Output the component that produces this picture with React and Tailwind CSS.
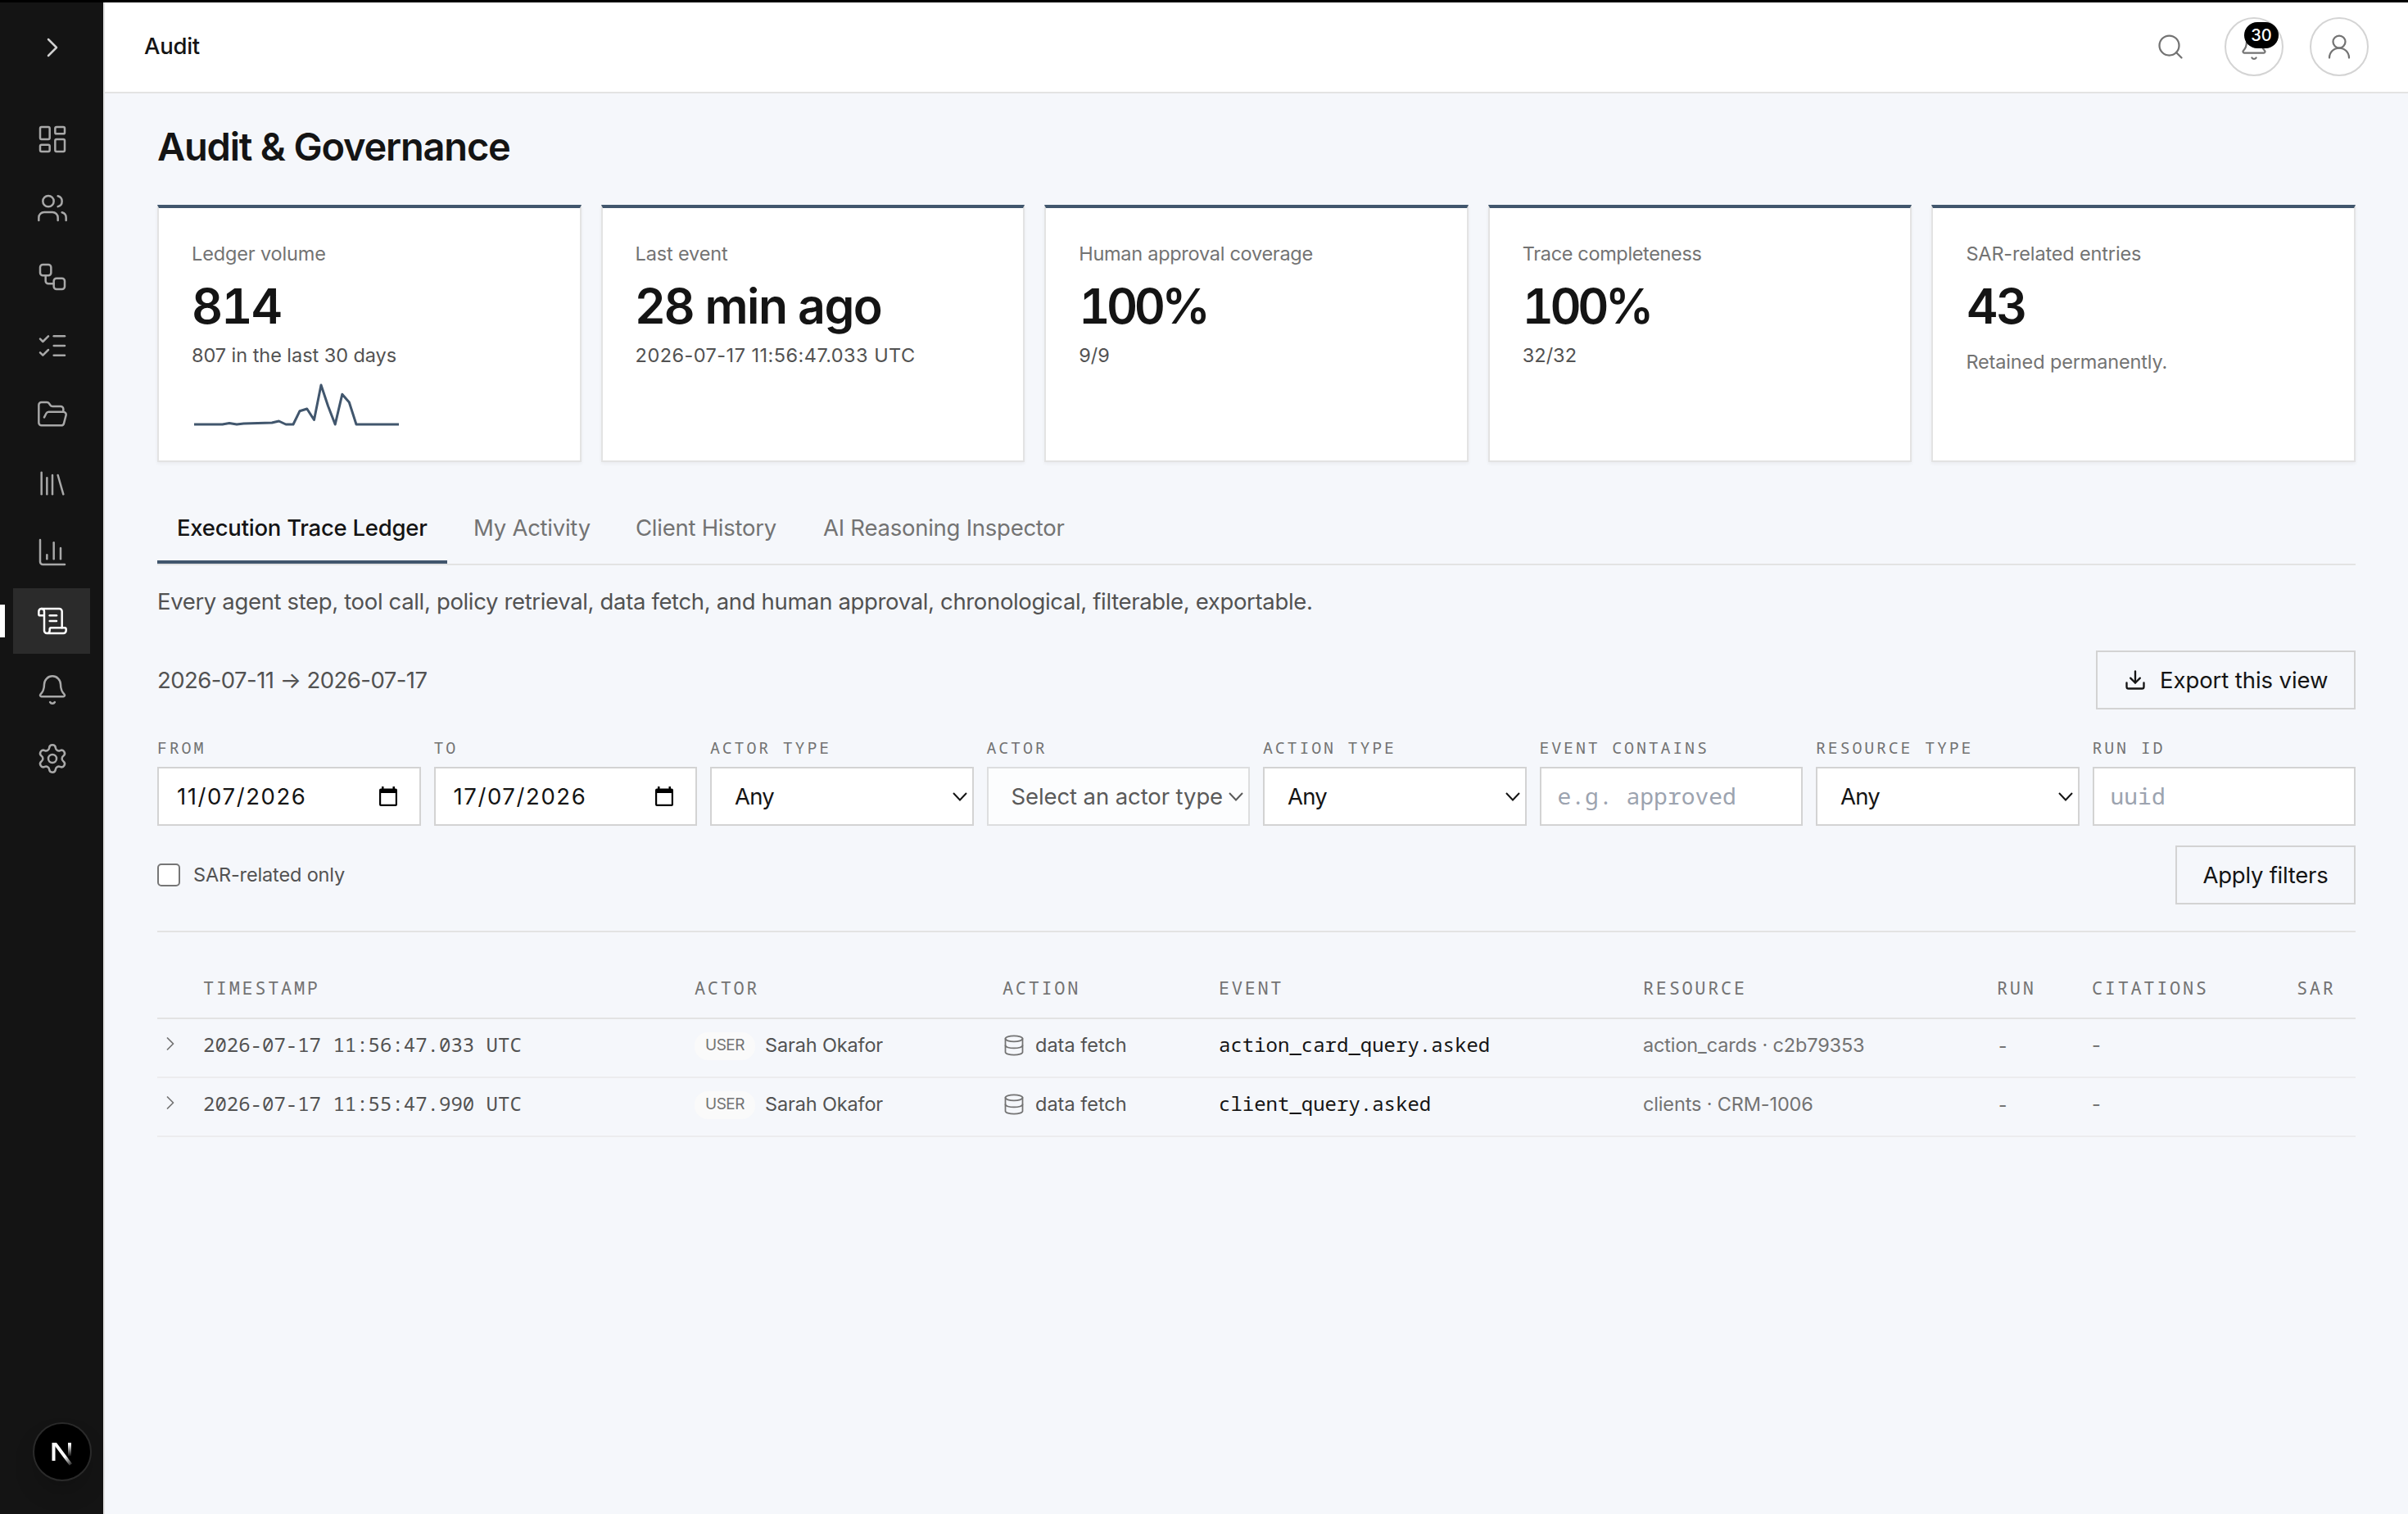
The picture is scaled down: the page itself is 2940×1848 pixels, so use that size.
import React from 'react';
import {
    Bell,
    ChartColumn,
    ChevronRight,
    Database,
    Download,
    FolderOpen,
    LayoutDashboard,
    Library,
    ListChecks,
    ScrollText,
    Search,
    Settings,
    UserRound,
    Users,
    Workflow,
} from 'lucide-react';

const navItems = [
    { name: 'Dashboard', icon: LayoutDashboard },
    { name: 'Clients', icon: Users },
    { name: 'Workflows', icon: Workflow },
    { name: 'Tasks', icon: ListChecks },
    { name: 'Documents', icon: FolderOpen },
    { name: 'Library', icon: Library },
    { name: 'Reports', icon: ChartColumn },
    { name: 'Audit', icon: ScrollText, active: true },
    { name: 'Notifications', icon: Bell },
    { name: 'Settings', icon: Settings },
];

const tabs = [
    { label: 'Execution Trace Ledger', width: 'w-[354px]', active: true },
    { label: 'My Activity', width: 'w-[190px]' },
    { label: 'Client History', width: 'w-[221px]' },
    { label: 'AI Reasoning Inspector', width: 'w-[344px]' },
];

const rows = [
    { time: '2026-07-17 11:56:47.033 UTC', actor: 'Sarah Okafor', event: 'action_card_query.asked', resource: 'action_cards · c2b79353' },
    { time: '2026-07-17 11:55:47.990 UTC', actor: 'Sarah Okafor', event: 'client_query.asked', resource: 'clients · CRM-1006' },
];

const columns = ['', 'Timestamp', 'Actor', 'Action', 'Event', 'Resource', 'Run', 'Citations', 'SAR'];
const columnGrid = 'grid grid-cols-[56px_600px_376px_264px_518px_432px_116px_250px_1fr] items-center';
const mono = "font-['Noto_Sans_Mono','DejaVu_Sans_Mono',monospace]";

const Sidebar = () => (
    <aside className="relative w-32 shrink-0 bg-[#141414] border-r-2 border-[#e3e3e3]">
        <button className="flex items-center h-[110px] pl-11 text-[#d0d0d0]">
            <ChevronRight size={40} strokeWidth={1.5} />
        </button>
        <nav className="flex flex-col gap-1 px-4 pt-[17px]">
            {navItems.map(({ name, icon: Icon, active }) => (
                <a
                    key={name}
                    aria-label={name}
                    className={`relative flex items-center h-20 w-[94px] pl-7 ${active ? 'bg-[#2b2b2b] text-white' : 'text-[#a8a8a8]'}`}
                >
                    {active && <span className="absolute -left-4 top-5 w-1.5 h-10 bg-white" />}
                    <Icon size={40} strokeWidth={1.5} />
                </a>
            ))}
        </nav>

        {/* Dev tools badge */}
        <div className="absolute left-10 bottom-10 w-[72px] h-[72px] rounded-full bg-black border-2 border-[#2a2a2a] shadow-[0_16px_32px_-8px_rgba(0,0,0,0.24)] z-10">
            <svg viewBox="0 0 68 68" className="w-full h-full" fill="none">
                <defs>
                    <linearGradient id="diag" x1="22" y1="24" x2="46" y2="52" gradientUnits="userSpaceOnUse">
                        <stop offset="0.6" stopColor="#fff" />
                        <stop offset="1" stopColor="#fff" stopOpacity="0" />
                    </linearGradient>
                    <linearGradient id="stem" x1="0" y1="23" x2="0" y2="40" gradientUnits="userSpaceOnUse">
                        <stop offset="0.1" stopColor="#fff" />
                        <stop offset="1" stopColor="#fff" stopOpacity="0" />
                    </linearGradient>
                </defs>
                <rect x="21.5" y="23" width="4" height="22" fill="#fff" />
                <rect x="41" y="23" width="4" height="16" fill="url(#stem)" />
                <path d="M22 23h5L46 48.5l-3.2 2.2L22 23Z" fill="url(#diag)" />
            </svg>
        </div>
    </aside>
);

const Header = () => (
    <header className="flex items-center justify-between h-[111px] shrink-0 bg-white border-b-2 border-[#e3e3e3] pl-12 pr-12 pb-px">
        <span className="text-[27.5px] font-medium tracking-[-0.3px] text-[#141414]">Audit</span>
        <div className="flex items-center text-[#737373]">
            <Search size={36} strokeWidth={1.5} />
            <button className="relative ml-12 flex items-center justify-center w-[72px] h-[72px] rounded-full border-2 border-[#d4d4d4]">
                <Bell size={36} strokeWidth={1.5} />
                <span className="absolute left-[22px] top-1 flex items-center justify-center w-[42px] h-8 rounded-full bg-black text-white text-[20px] font-medium">
                    30
                </span>
            </button>
            <button className="ml-8 flex items-center justify-center w-[72px] h-[72px] rounded-full border-2 border-[#d4d4d4]">
                <UserRound size={36} strokeWidth={1.5} />
            </button>
        </div>
    </header>
);

const StatCard = ({ label, labelClass = 'tracking-[-0.15px]', value, valueClass, children }) => (
    <div className="bg-white border-2 border-t-4 border-[#e3e3e3] border-t-[#41566d] p-10 shadow-[0_2px_4px_rgba(0,0,0,0.05)] text-[23.5px]">
        <div className={`leading-8 text-[#737373] ${labelClass}`}>{label}</div>
        <div className={`mt-4 text-[59px] leading-[63px] font-semibold text-[#141414] ${valueClass}`}>{value}</div>
        {children}
    </div>
);

const Sparkline = () => (
    <svg viewBox="0 0 256 56" className="mt-4 w-64 h-14" fill="none" stroke="#41566d" strokeWidth="3" strokeLinejoin="round">
        <path d="M3 52H37.5L46 50.5L55 52L63.5 51L98 50L106.5 48L115 52H124L132 35.7L140.8 33L149.5 46.5L158 4L166.5 29.5L175.2 52L183.8 15.3L192.3 25L201 52H253" />
    </svg>
);

const Field = ({ label, children }) => (
    <label className="flex-1 min-w-0">
        <span className={`${mono} block h-[38px] pt-px leading-7 text-[20px] tracking-[2.8px] uppercase text-[#737373]`}>{label}</span>
        {children}
    </label>
);

const DateField = ({ label, value }) => (
    <Field label={label}>
        <div className="flex items-center justify-between h-[72px] bg-white border-2 border-[#d3d3d3] pt-px pl-[22px] pr-[27px] text-[27.5px] tracking-[1.6px] text-[#141414]">
            {value}
            <svg viewBox="0 0 22 24" className="w-[22px] h-6 mb-0.5" fill="#000">
                <path fillRule="evenodd" d="M3 0h2.5v2.5h11V0H19v2.5h1a2 2 0 0 1 2 2V22a2 2 0 0 1-2 2H2a2 2 0 0 1-2-2V4.5a2 2 0 0 1 2-2h1V0ZM2.2 8v13.800h17.600V8H2.200Z" />
            </svg>
        </div>
    </Field>
);

const SelectField = ({ label, value, disabled }) => (
    <Field label={label}>
        <div
            className={`flex items-center h-[72px] border-2 pt-px pl-7 pr-[6px] text-[27.5px] ${
                disabled ? 'bg-[#fcfdfe] border-[#dddedf] text-[#5a5a5a] tracking-[-0.1px]' : 'bg-white border-[#d3d3d3] text-[#141414] tracking-[-0.8px]'
            }`}
        >
            <span className="flex-1 whitespace-nowrap">{value}</span>
            <svg viewBox="0 0 18 11" className="w-[18px] h-[11px] shrink-0" fill="none" stroke="currentColor" strokeWidth="2">
                <path d="M1 1l8 8.5L17 1" />
            </svg>
        </div>
    </Field>
);

const TextField = ({ label, placeholder }) => (
    <Field label={label}>
        <input
            className={`${mono} block w-full h-[72px] bg-white border-2 border-[#d3d3d3] pl-5 pb-[2px] text-[28px] placeholder:text-[#9ca3af]`}
            placeholder={placeholder}
        />
    </Field>
);

export default function App() {
    return (
        <div className="flex flex-col h-[1848px] overflow-hidden bg-[#f5f7fb] font-['Inter',sans-serif]">
            <div className="h-[3px] shrink-0 bg-black" />
            <div className="flex flex-1 min-h-0">
                <Sidebar />
                <div className="flex-1 min-w-0 flex flex-col">
                    <Header />
                    <main className="px-16 pt-[33px]">
                        <h1 className="text-[47px] leading-[64px] font-semibold tracking-[-1.2px] text-[#141414]">Audit &amp; Governance</h1>

                        <section className="mt-[39px] grid grid-cols-5 gap-6">
                            <StatCard label="Ledger volume" value="814" valueClass="tabular-nums tracking-[-1.8px]">
                                <div className="mt-3 leading-[33px] tracking-[-0.05px] text-[#525252]">807 in the last 30 days</div>
                                <Sparkline />
                            </StatCard>
                            <StatCard label="Last event" value="28 min ago" valueClass="tracking-[-1.5px]">
                                <div className="mt-3 leading-[33px] tracking-[0.46px] text-[#525252]">2026-07-17 11:56:47.033 UTC</div>
                            </StatCard>
                            <StatCard label="Human approval coverage" labelClass="tracking-[-0.27px]" value="100%" valueClass="tabular-nums tracking-[-4.4px]">
                                <div className="mt-3 leading-[33px] text-[#525252]">9/9</div>
                            </StatCard>
                            <StatCard label="Trace completeness" labelClass="tracking-[-0.35px]" value="100%" valueClass="tabular-nums tracking-[-4.4px]">
                                <div className="mt-3 leading-[33px] text-[#525252]">32/32</div>
                            </StatCard>
                            <StatCard label="SAR-related entries" value="43" valueClass="tracking-[-2.8px]">
                                <div className="mt-5 leading-[33px] tracking-[-0.14px] text-[#737373]">Retained permanently.</div>
                            </StatCard>
                        </section>

                        <div className="mt-10 flex gap-2 border-b-2 border-[#e3e3e3] text-[27.5px] tracking-[-0.25px]">
                            {tabs.map(({ label, width, active }) => (
                                <button
                                    key={label}
                                    className={`h-[84px] border-b-4 pl-6 pt-0.5 text-left whitespace-nowrap ${width} ${
                                        active ? 'border-[#41566d] font-medium text-[#141414]' : 'border-transparent text-[#737373]'
                                    }`}
                                >
                                    {label}
                                </button>
                            ))}
                        </div>

                        <p className="mt-6 text-[27.5px] leading-10 tracking-[-0.35px] text-[#525252]">
                            Every agent step, tool call, policy retrieval, data fetch, and human approval, chronological, filterable, exportable.
                        </p>

                        <div className="mt-10 flex items-center justify-between text-[27.5px]">
                            <span className="pt-0.5 tracking-[-0.55px] text-[#525252]">2026-07-11 → 2026-07-17</span>
                            <button className="flex items-center gap-4 w-[317px] h-[72px] pl-8 border-2 border-[#d3d3d3] tracking-[-0.08px] whitespace-nowrap text-[#141414]">
                                <Download size={28} strokeWidth={2} />
                                <span className="pt-px">Export this view</span>
                            </button>
                        </div>

                        <form className="border-b-2 border-[#e3e3e3] pb-8">
                            <div className="mt-8 flex gap-4">
                                <DateField label="From" value="11/07/2026" />
                                <DateField label="To" value="17/07/2026" />
                                <SelectField label="Actor type" value="Any" />
                                <SelectField label="Actor" value="Select an actor type" disabled />
                                <SelectField label="Action type" value="Any" />
                                <TextField label="Event contains" placeholder="e.g. approved" />
                                <SelectField label="Resource type" value="Any" />
                                <TextField label="Run ID" placeholder="uuid" />
                            </div>
                            <div className="mt-6 flex items-center justify-between">
                                <label className="flex items-center gap-4 text-[23.5px] tracking-[-0.15px] text-[#525252]">
                                    <span className="w-7 h-7 rounded-[5px] border-2 border-[#767676] bg-white" />
                                    SAR-related only
                                </label>
                                <button type="button" className="w-[220px] h-[72px] pt-0.5 border-2 border-[#d3d3d3] text-[27.5px] tracking-[-0.25px] text-[#141414]">
                                    Apply filters
                                </button>
                            </div>
                        </form>

                        <section className="mt-8">
                            <div className={`${columnGrid} ${mono} h-[74px] pb-px border-b-2 border-[#e3e3e3] text-[22px] tracking-[2.64px] uppercase text-[#737373]`}>
                                {columns.map((column) => (
                                    <span key={column}>{column}</span>
                                ))}
                            </div>
                            {rows.map(({ time, actor, event, resource }) => (
                                <div key={time} className={`${columnGrid} h-[72px] pb-[7px] border-b-2 border-[#ececee] text-[23.5px] tracking-[-0.15px] text-[#525252]`}>
                                    <ChevronRight size={28} strokeWidth={1.5} className="ml-0.5 mb-[3px] text-[#737373]" />
                                    <span className={`${mono} mb-0.5 text-[24px] tracking-normal`}>{time}</span>
                                    <span className="flex items-center gap-3">
                                        <span className="flex items-center justify-center w-[74px] h-[34px] mt-0.5 rounded-2xl bg-[#fafafa] text-[19px] tracking-[-0.5px] text-[#737373]">
                                            USER
                                        </span>
                                        {actor}
                                    </span>
                                    <span className="flex items-center gap-3 tracking-normal">
                                        <Database size={28} strokeWidth={1.5} className="text-[#737373]" />
                                        data fetch
                                    </span>
                                    <span className={`${mono} mb-0.5 text-[24px] tracking-normal text-[#141414]`}>{event}</span>
                                    <span className="text-[#737373]">{resource}</span>
                                    <span className={`${mono} mb-0.5 text-[24px] text-[#737373]`}>-</span>
                                    <span className="text-[#737373]">-</span>
                                    <span />
                                </div>
                            ))}
                        </section>
                    </main>
                </div>
            </div>
        </div>
    );
}
